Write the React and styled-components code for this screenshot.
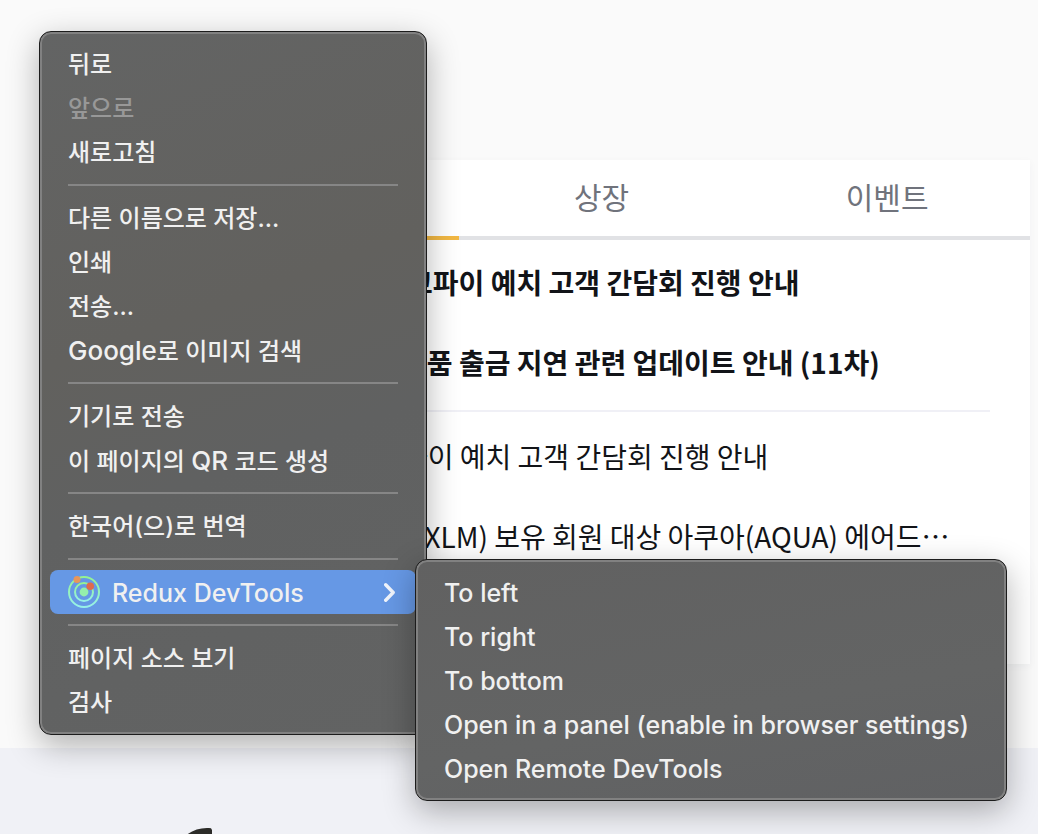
import React from "react";
import styled, { createGlobalStyle } from "styled-components";

const GlobalStyle = createGlobalStyle`
  * { box-sizing: border-box; }
  body {
    margin: 0;
    background: #fafafa;
    font-family: "Noto Sans CJK KR", sans-serif;
    color: #121418;
  }
  button { font: inherit; border: 0; background: none; padding: 0; }
  ul { list-style: none; margin: 0; padding: 0; }
`;

const Page = styled.div`
  position: relative;
  display: flex;
  flex-direction: column;
  height: 100vh;
  overflow: hidden;
`;

const Main = styled.main`
  flex: none;
  padding: 160px 8px 84px 173px;
`;

const NoticePanel = styled.section`
  min-height: 504px;
  background: #fff;
  box-shadow: 0 2px 8px rgba(30, 40, 80, 0.04);
`;

const Tabs = styled.div`
  display: grid;
  grid-template-columns: repeat(3, 1fr);
`;

const Tab = styled.button`
  height: 80px;
  padding-bottom: 4px;
  border-bottom: 4px solid ${(p) => (p.$active ? "#f2b843" : "#e1e2e5")};
  font-size: 30px;
  line-height: 44px;
  color: ${(p) => (p.$active ? "#121418" : "#70737c")};
`;

const NoticeGroup = styled.ul`
  margin: 0 40px;
  padding: 2px 0 8px;
  & + & {
    padding-top: 4px;
    border-top: 2px solid #f0f0f6;
  }
`;

const Notice = styled.li`
  display: flex;
  align-items: center;
  height: 80px;
  padding-left: ${(p) => p.$lead}px;
  font-size: 28px;
  line-height: 40px;
  font-weight: ${(p) => (p.$pinned ? 700 : 400)};
  white-space: nowrap;
`;

const Footer = styled.footer`
  flex: 1 0 86px;
  padding: 80px 0 0 180px;
  background: #f0f1f6;
  svg { display: block; }
`;

const MenuSurface = styled.div`
  position: absolute;
  padding: 10px;
  border: 1px solid #1c1c1c;
  border-radius: 12px;
  background: linear-gradient(160deg, #636464, #62615e 40%, #606161 60%, #626363);
  box-shadow: inset 0 0 0 2px #818181, 0 10px 32px rgba(0, 0, 0, 0.3);
  color: #f0f0f0;
  font-family: Inter, "Noto Sans CJK KR", sans-serif;
`;

const ContextMenu = styled(MenuSurface)`
  top: 31px;
  left: 39px;
  width: 388px;
`;

const Submenu = styled(MenuSurface)`
  top: -11px;
  left: calc(100% - 1px);
  width: 592px;
  background: linear-gradient(170deg, #616161, #636464 60%, #606163);
`;

const ItemWrap = styled.div`
  position: relative;
`;

const MenuItem = styled.button`
  display: flex;
  align-items: center;
  gap: 12px;
  width: 100%;
  height: 44px;
  padding: 0 18px;
  border-radius: 8px;
  background: ${(p) => (p.$open ? "#6698e5" : "transparent")};
  color: ${(p) => (p.disabled ? "#989898" : "#f0f0f0")};
  font-size: ${(p) => (p.$latin ? 25 : 24)}px;
  font-weight: 500;
  line-height: 32px;
  text-align: left;
  white-space: nowrap;
`;

const ItemLabel = styled.span`
  flex: 1;
  padding-top: 2px;
`;

const Latin = styled.span`
  font-size: 26px;
`;

const Separator = styled.hr`
  height: 2px;
  margin: 10px 18px;
  border: 0;
  background: #868686;
`;

const ReduxIcon = () => (
  <svg width="32" height="32" viewBox="0 0 32 32" fill="none" aria-hidden="true">
    <defs>
      <linearGradient id="ring" x1="0" y1="0" x2="0" y2="1">
        <stop offset="0" stopColor="#95f391" />
        <stop offset="1" stopColor="#97f1ea" />
      </linearGradient>
    </defs>
    <circle cx="16" cy="16" r="15" stroke="url(#ring)" strokeWidth="2" />
    <circle cx="16" cy="16" r="9" stroke="url(#ring)" strokeWidth="2" />
    <circle cx="16" cy="16" r="4.4" fill="#94efac" />
    <circle cx="9" cy="3.5" r="3.5" fill="#e8965a" />
    <circle cx="22.2" cy="10.3" r="3.8" fill="#e06b4b" />
  </svg>
);

const Chevron = () => (
  <svg width="14" height="20" viewBox="0 0 14 20" fill="none" aria-hidden="true">
    <path d="M1.700 2.700 9.200 10.500l-7.500 7.800" stroke="#f0f4fb" strokeWidth="3.4" strokeLinecap="round" strokeLinejoin="round" />
  </svg>
);

const pinned = [
  { lead: 194, text: "고파이 예치 고객 간담회 진행 안내" },
  { lead: 188, text: "상품 출금 지연 관련 업데이트 안내 (11차)" },
];

const recent = [
  { lead: 189, text: "파이 예치 고객 간담회 진행 안내" },
  { lead: 202, text: "(XLM) 보유 회원 대상 아쿠아(AQUA) 에어드…" },
];

const groups = [
  [{ label: "뒤로" }, { label: "앞으로", disabled: true }, { label: "새로고침" }],
  [
    { label: "다른 이름으로 저장..." },
    { label: "인쇄" },
    { label: "전송..." },
    { label: "Google로 이미지 검색" },
  ],
  [{ label: "기기로 전송" }, { label: "이 페이지의 QR 코드 생성" }],
  [{ label: "한국어(으)로 번역" }],
  [
    {
      label: "Redux DevTools",
      children: [
        "To left",
        "To right",
        "To bottom",
        "Open in a panel (enable in browser settings)",
        "Open Remote DevTools",
      ],
    },
  ],
  [{ label: "페이지 소스 보기" }, { label: "검사" }],
];

const withLatin = (label) =>
  label
    .split(/([A-Za-z]+)/)
    .filter(Boolean)
    .map((part, i) => (/^[A-Za-z]/.test(part) ? <Latin key={i}>{part}</Latin> : part));

const Entry = ({ item }) => {
  if (!item.children) {
    return (
      <MenuItem role="menuitem" disabled={item.disabled}>
        <ItemLabel>{withLatin(item.label)}</ItemLabel>
      </MenuItem>
    );
  }
  return (
    <ItemWrap>
      <MenuItem role="menuitem" aria-haspopup="menu" aria-expanded="true" $open $latin>
        <ReduxIcon />
        <ItemLabel>{item.label}</ItemLabel>
        <Chevron />
      </MenuItem>
      <Submenu role="menu" aria-label={item.label}>
        {item.children.map((label) => (
          <MenuItem key={label} role="menuitem" $latin>
            <ItemLabel>{label}</ItemLabel>
          </MenuItem>
        ))}
      </Submenu>
    </ItemWrap>
  );
};

export default function App() {
  return (
    <Page>
      <GlobalStyle />
      <Main>
        <NoticePanel>
          <Tabs role="tablist">
            <Tab role="tab" aria-selected="true" aria-label="공지" $active />
            <Tab role="tab" aria-selected="false">상장</Tab>
            <Tab role="tab" aria-selected="false">이벤트</Tab>
          </Tabs>
          <NoticeGroup>
            {pinned.map((n) => (
              <Notice key={n.text} $lead={n.lead} $pinned>{n.text}</Notice>
            ))}
          </NoticeGroup>
          <NoticeGroup>
            {recent.map((n) => (
              <Notice key={n.text} $lead={n.lead}>{n.text}</Notice>
            ))}
          </NoticeGroup>
        </NoticePanel>
      </Main>
      <Footer>
        <svg width="40" height="40" viewBox="0 0 40 40" aria-hidden="true">
          <path d="M3 10C10 3 20 -1 31 .3L32 2v12H3Z" fill="#2b2b28" />
        </svg>
      </Footer>
      <ContextMenu role="menu">
        {groups.map((group, i) => (
          <React.Fragment key={i}>
            {i > 0 && <Separator />}
            {group.map((item) => (
              <Entry key={item.label} item={item} />
            ))}
          </React.Fragment>
        ))}
      </ContextMenu>
    </Page>
  );
}
